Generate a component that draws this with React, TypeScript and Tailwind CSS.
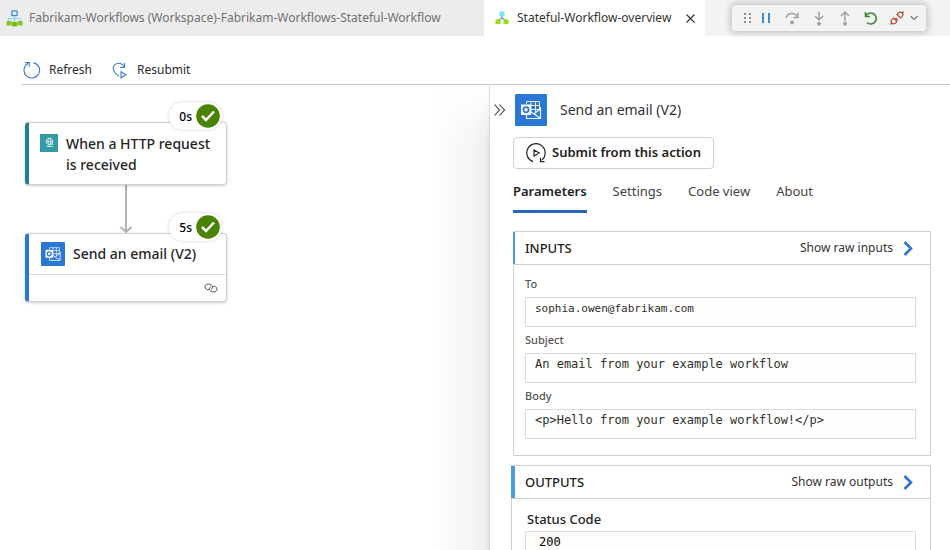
import { useState } from "react";
import type { ReactNode } from "react";

const sans = "font-['Noto_Sans','Open_Sans',sans-serif]";
const mono = "font-['DejaVu_Sans_Mono','Liberation_Mono',monospace]";

function WorkflowIcon() {
  return (
    <svg width="17" height="17" viewBox="0 0 17 17" fill="none" aria-hidden="true" className="shrink-0">
      <path d="M8.500 6v6M2.500 12V8.500h12V12" stroke="#7fdcf2" strokeWidth="1.200" />
      <rect x="6" y="1" width="5" height="4.500" fill="#e8f4ff" stroke="#3f88d6" strokeWidth="1.300" />
      <rect x="0.500" y="11" width="5" height="4.500" fill="#86c81a" />
      <rect x="6" y="12" width="5" height="4.500" fill="#76bc12" />
      <rect x="11.500" y="11" width="5" height="4.500" fill="#86c81a" />
    </svg>
  );
}

function OverviewIcon() {
  return (
    <svg width="14" height="14" viewBox="0 0 14 14" fill="none" aria-hidden="true" className="shrink-0">
      <path d="M7 5v2L3 9.500M7 7l4 2.500" stroke="#5b9bd8" strokeWidth="1.300" />
      <rect x="4.500" y="0.500" width="5" height="4.500" fill="#7fe0f5" />
      <rect x="0.500" y="8.500" width="5" height="4.500" fill="#9be010" />
      <rect x="8.500" y="8.500" width="5" height="4.500" fill="#9be010" />
    </svg>
  );
}

function OutlookIcon({ className }: { className: string }) {
  return (
    <svg viewBox="0 0 32 32" className={className} fill="none" aria-hidden="true">
      <rect width="32" height="32" rx="1" fill="#2b78d4" />
      <path d="M11.500 10V7.500h13V17M16 7.500V19M20.500 7.500V19M11.500 11.500h13M15 15.500h9.500" stroke="#fff" strokeWidth="1" strokeOpacity="0.85" />
      <path d="M25.500 13v11.500h-14V21M25.500 14.500 19 20l-3-2M19 20l6 4" stroke="#fff" strokeWidth="1.100" />
      <rect x="6" y="10.500" width="10" height="10.500" fill="#fff" />
      <circle cx="11" cy="15.800" r="2.600" stroke="#2b78d4" strokeWidth="1.700" />
    </svg>
  );
}

function RequestIcon() {
  return (
    <svg width="18" height="18" viewBox="0 0 18 18" fill="none" aria-hidden="true" className="shrink-0">
      <rect width="18" height="18" fill="#339ca4" />
      <g stroke="#e6f7f7" strokeWidth="0.800">
        <circle cx="9.500" cy="7.500" r="3.300" />
        <ellipse cx="9.500" cy="7.500" rx="1.400" ry="3.300" />
        <path d="M6.200 7.500h6.600M9.500 11v2M6.500 12.500h6.500M11 9.500l2.500 1" />
      </g>
    </svg>
  );
}

function RefreshIcon() {
  return (
    <svg width="18" height="18" viewBox="0 0 18 18" fill="none" stroke="#3b78d0" strokeWidth="1.100" aria-hidden="true">
      <path d="M10.500 1.600A7.800 7.800 0 1 1 5.200 2.300M2 1.500h4.300v4.200" />
    </svg>
  );
}

function ResubmitIcon() {
  return (
    <svg width="17" height="17" viewBox="0 0 17 17" fill="none" stroke="#3b78d0" strokeWidth="1.100" aria-hidden="true">
      <path d="M12.500 1v4.500H8M12.300 5.300C11.200 2.800 9.200 1.200 6.500 1.200 3.500 1.200 1.200 3.600 1.200 6.500c0 2 .9 3.200 2.300 4.600l3.300 3.200M9 9.800v6l5-3z" />
    </svg>
  );
}

function DoubleChevron() {
  return (
    <svg width="12" height="12" viewBox="0 0 12 12" fill="none" stroke="#3a3a3a" strokeWidth="1.100" aria-hidden="true">
      <path d="m.500.500 5 5.500-5 5.500M5.500.500l5 5.500-5 5.500" />
    </svg>
  );
}

function SubmitIcon() {
  return (
    <svg width="20" height="20" viewBox="0 0 20 20" fill="none" stroke="#222" strokeWidth="1.200" aria-hidden="true">
      <path d="M7 18.600A9.200 9.200 0 1 1 15.800 17M18.500 18.700h-4v-4M8 7v6l5.300-3z" />
    </svg>
  );
}

function CheckBadge({ time }: { time: string }) {
  return (
    <div className="absolute -top-[21px] right-1 flex h-7 items-center gap-1 rounded-full bg-white pl-2.5 pr-0.5 shadow-[0_0_3px_rgba(0,0,0,0.2)]">
      <span className="pt-0.5 text-[12px] font-medium leading-5 text-black">{time}</span>
      <svg width="24" height="24" viewBox="0 0 24 24" fill="none" aria-label="Succeeded" role="img">
        <circle cx="12" cy="12" r="11.800" fill="#498205" />
        <path d="m6 12 4 4 8-8.500" stroke="#fff" strokeWidth="2.500" />
      </svg>
    </div>
  );
}

function ToolButton({ label, children, width = "w-[26px]" }: { label: string; children: ReactNode; width?: string }) {
  return (
    <button type="button" aria-label={label} className={`flex h-6 items-center justify-center ${width}`}>
      {children}
    </button>
  );
}

function DebugBar() {
  return (
    <div className="absolute right-6 top-[5px] flex h-[26px] w-[194px] items-center rounded bg-[#f3f3f3] pl-2 shadow-[0_0_7px_2px_rgba(0,0,0,0.2)]">
      <ToolButton label="Move toolbar" width="w-[14px]">
        <svg width="7" height="12" viewBox="0 0 7 12" fill="#8c8c8c" aria-hidden="true">
          <path d="M0 1h2v2H0zM5 1h2v2H5zM0 5h2v2H0zM5 5h2v2H5zM0 9h2v2H0zM5 9h2v2H5z" />
        </svg>
      </ToolButton>
      <ToolButton label="Pause" width="w-[24px]">
        <svg width="8" height="10" viewBox="0 0 8 10" fill="#3c89d6" aria-hidden="true">
          <path d="M0 0h2v10H0zM6 0h2v10H6z" />
        </svg>
      </ToolButton>
      <ToolButton label="Step over" width="w-7">
        <svg width="14" height="14" viewBox="0 0 14 14" fill="none" stroke="#a0a0a0" strokeWidth="1.400" aria-hidden="true">
          <path d="M1 7C2 4 4.300 2.500 7 2.500S11.500 3.800 12.500 6M13 1.500v5H8.500" />
          <circle cx="7" cy="11.500" r="2" fill="#a0a0a0" stroke="none" />
        </svg>
      </ToolButton>
      <ToolButton label="Step into">
        <svg width="12" height="15" viewBox="0 0 12 15" fill="none" stroke="#a0a0a0" strokeWidth="1.400" aria-hidden="true">
          <path d="M6 .5v8M2 5l4 4 4-4" />
          <circle cx="6" cy="12.800" r="2" fill="#a0a0a0" stroke="none" />
        </svg>
      </ToolButton>
      <ToolButton label="Step out">
        <svg width="12" height="15" viewBox="0 0 12 15" fill="none" stroke="#a0a0a0" strokeWidth="1.400" aria-hidden="true">
          <path d="M6 10V1M2 5l4-4 4 4" />
          <circle cx="6" cy="12.800" r="2" fill="#a0a0a0" stroke="none" />
        </svg>
      </ToolButton>
      <ToolButton label="Restart">
        <svg width="14" height="14" viewBox="0 0 14 14" fill="none" stroke="#388a34" strokeWidth="1.600" aria-hidden="true">
          <path d="M1.500 1v4.500H6M1.700 5.200A5.500 5.500 0 1 1 3 11.500" />
        </svg>
      </ToolButton>
      <ToolButton label="Disconnect">
        <svg width="14" height="14" viewBox="0 0 14 14" fill="none" stroke="#b5452f" strokeWidth="1.200" aria-hidden="true">
          <path d="m7 3.500 3.500 3.500 1.600-1.600a2.400 2.400 0 0 0-3.500-3.500zM2 8.600l1.600-1.600L7 10.500l-1.600 1.600A2.400 2.400 0 0 1 2 8.600zM12 2l1.500-1.500M.5 13.500 2 12M5 8.500l1.500-1.500M6 9.500l1.500-1.500" />
        </svg>
      </ToolButton>
      <ToolButton label="More" width="w-2">
        <svg width="8" height="6" viewBox="0 0 8 6" fill="none" stroke="#777" strokeWidth="1.100" aria-hidden="true">
          <path d="m.5 1 3.500 3.500L7.500 1" />
        </svg>
      </ToolButton>
    </div>
  );
}

function Section({
  title,
  action,
  accent,
  className,
  children,
}: {
  title: string;
  action: string;
  accent: string;
  className: string;
  children: ReactNode;
}) {
  return (
    <section className={`border border-[#cfcfcf] ${className}`}>
      <header className={`-ml-px flex h-8 items-center justify-between pr-4 ${accent}`}>
        <h2 className="text-[13px] font-medium leading-5 text-[#222]">{title}</h2>
        <button type="button" className="flex items-center gap-2.5 text-[12px] leading-5 text-[#333]">
          {action}
          <svg width="11" height="15" viewBox="0 0 11 15" fill="none" stroke="#2f74d8" strokeWidth="2.600" aria-hidden="true">
            <path d="m1.500 1 6.500 6.500L1.500 14" />
          </svg>
        </button>
      </header>
      <div className="border-t border-[#cfcfcf]">{children}</div>
    </section>
  );
}

function Field({ id, label, value, textSize }: { id: string; label: string; value: string; textSize: string }) {
  return (
    <div className="flex flex-col">
      <label htmlFor={id} className="text-[11px] font-medium leading-[26px] text-[#555]">
        {label}
      </label>
      <input
        id={id}
        readOnly
        value={value}
        className={`h-[30px] w-full border border-[#dcdcdc] bg-[#fefefc] px-[9px] pb-2 text-[#2e2e2e] outline-none ${mono} ${textSize}`}
      />
    </div>
  );
}

const tabs = ["Parameters", "Settings", "Code view", "About"];

export default function App() {
  const [active, setActive] = useState("Parameters");

  return (
    <div className={`relative flex h-screen flex-col overflow-hidden bg-white ${sans}`}>
      <nav className="flex h-9 shrink-0 bg-[#f3f3f3] text-[12px]">
        <button type="button" className="flex w-[484px] items-center gap-1.5 bg-[#ececec] pl-[6px] text-[#717171]">
          <WorkflowIcon />
          <span className="whitespace-nowrap">Fabrikam-Workflows (Workspace)-Fabrikam-Workflows-Stateful-Workflow</span>
        </button>
        <div className="flex w-[221px] items-center justify-between bg-white pl-[11px] pr-2.5 text-[#333]">
          <button type="button" className="flex items-center gap-2 whitespace-nowrap">
            <OverviewIcon />
            Stateful-Workflow-overview
          </button>
          <button type="button" aria-label="Close tab">
            <svg width="9" height="9" viewBox="0 0 9 9" fill="none" stroke="#333" strokeWidth="1.100" aria-hidden="true">
              <path d="m.5 .5 8 8m0-8-8 8" />
            </svg>
          </button>
        </div>
      </nav>
      <DebugBar />

      <div className="ml-[22px] flex h-[49px] shrink-0 items-end gap-5 border-b border-[#c8c8c8] pb-[5px] pl-px text-[12px] text-[#2b2b2b]">
        <button type="button" className="flex items-center gap-2">
          <RefreshIcon />
          Refresh
        </button>
        <button type="button" className="flex items-center gap-2">
          <ResubmitIcon />
          Resubmit
        </button>
      </div>

      <div className="flex min-h-0 grow">
        <main className="min-w-0 grow bg-[linear-gradient(to_bottom,#fff,#ffffff00_60px),linear-gradient(to_left,#e4e4e4,#eeeeee_4px,#f5f5f5_16px,#fff_60px)] pl-[25px] pt-[37px]">
          <div className="flex w-[202px] flex-col items-center">
            <div className="relative flex h-[63px] w-full gap-2 rounded-sm border border-l-4 border-[#d0d0d0] border-l-[#23808a] bg-white pl-[11px] pt-[11px] shadow-[0_1px_3px_rgba(0,0,0,0.2)]">
              <RequestIcon />
              <h3 className="-mt-px text-[14px] font-medium leading-[21px] text-[#262626]">
                When a HTTP request
                <br />
                is received
              </h3>
              <CheckBadge time="0s" />
            </div>
            <svg width="14" height="48" viewBox="0 0 14 48" fill="none" stroke="#b3b3b7" strokeWidth="2" aria-hidden="true">
              <path d="M7 0v46M1.500 42 7 47l5.500-5" />
            </svg>
            <div className="relative w-full rounded-sm border border-l-4 border-[#d0d0d0] border-l-[#2b78d4] bg-white shadow-[0_1px_3px_rgba(0,0,0,0.2)]">
              <div className="flex h-[41px] items-center gap-2 border-b border-[#dcdcdc] pl-3">
                <OutlookIcon className="size-6" />
                <h3 className="text-[14px] font-medium leading-5 text-[#262626]">Send an email (V2)</h3>
              </div>
              <div className="flex h-[26px] items-center justify-end pr-2">
                <svg width="14" height="10" viewBox="0 0 14 10" fill="none" stroke="#555" strokeWidth="1" aria-label="Connection" role="img">
                  <path d="M5 6.800C2.700 7 1 5.700 1 3.900 1 2.200 2.400 1 4.200 1c2.200 0 4.500 1.400 4.500 3.200 0 1-.7 1.800-1.700 2.100M9 3.200c2.300-.2 4 1.100 4 2.900C13 7.800 11.600 9 9.800 9 7.600 9 5.300 7.600 5.300 5.800c0-1 .7-1.800 1.700-2.100" />
                </svg>
              </div>
              <CheckBadge time="5s" />
            </div>
          </div>
        </main>

        <aside className="w-[461px] shrink-0 border-l border-[#dadada] bg-white pr-[19px]">
          <div className="flex items-center pl-1 pt-[9px]">
            <button type="button" aria-label="Collapse panel" className="w-[21px]">
              <DoubleChevron />
            </button>
            <OutlookIcon className="size-8" />
            <h1 className="ml-[13px] text-[14px] leading-5 text-[#333]">Send an email (V2)</h1>
          </div>

          <div className="pl-[23px]">
            <button
              type="button"
              className="mt-[11px] flex h-8 items-center gap-1.5 rounded border border-[#cfcfcf] px-3 text-[13px] font-semibold text-[#222]"
            >
              <SubmitIcon />
              Submit from this action
            </button>

            <div role="tablist" className="mt-2 flex gap-[26px] text-[13px] leading-5 text-[#444]">
              {tabs.map((tab) => (
                <button
                  key={tab}
                  type="button"
                  role="tab"
                  aria-selected={tab === active}
                  onClick={() => setActive(tab)}
                  className={
                    tab === active
                      ? "border-b-3 border-[#2766b8] pb-[9px] pt-1 font-semibold text-[#222]"
                      : "border-b-3 border-transparent pb-[9px] pt-1"
                  }
                >
                  {tab}
                </button>
              ))}
            </div>
          </div>

          <Section title="INPUTS" action="Show raw inputs" accent="border-l-2 border-[#4a9be0] pl-2.5" className="ml-[23px] mt-[18px]">
            <div className="flex flex-col pb-4 pl-[11px] pr-3.5 pt-1.5">
              <Field id="to" label="To" value="sophia.owen@fabrikam.com" textSize="text-[11px]" />
              <Field id="subject" label="Subject" value="An email from your example workflow" textSize="text-[12px]" />
              <Field id="body" label="Body" value="<p>Hello from your example workflow!</p>" textSize="text-[12px]" />
            </div>
          </Section>

          <Section title="OUTPUTS" action="Show raw outputs" accent="border-l-4 border-[#4a9be0] pl-2.5" className="ml-[21px] mt-[9px]">
            <div className="flex flex-col gap-0.5 pb-4 pl-[13px] pr-3.5 pt-[10px]">
              <label htmlFor="status" className="pl-0.5 text-[13px] font-medium leading-5 text-[#222]">
                Status Code
              </label>
              <input
                id="status"
                readOnly
                value="200"
                className={`h-[30px] w-full border border-[#dcdcdc] bg-[#fefefc] px-[13px] pb-2 text-[12px] text-black outline-none ${mono}`}
              />
            </div>
          </Section>
        </aside>
      </div>
    </div>
  );
}
